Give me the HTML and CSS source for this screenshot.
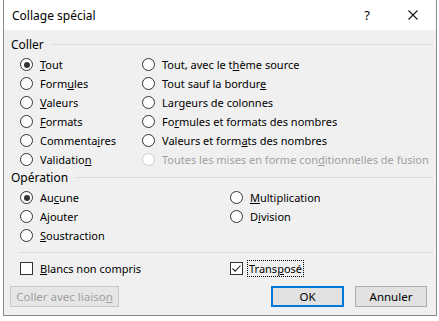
FILE: index.html
```html
<!DOCTYPE html>
<html lang="fr">
<head>
  <meta charset="UTF-8">
  <title>Collage spécial</title>
  <link rel="stylesheet" href="styles.css">
</head>
<body>

  <!-- Dialog -->
  <div class="dialog">
    <div class="titlebar">
      <span class="title">Collage spécial</span>
      <span class="caption-btn help">?</span>
      <span class="caption-btn close">
        <svg width="10" height="10" viewBox="0 0 10 10"><path d="M0.5 0.5L9.5 9.5M9.5 0.5L0.5 9.5" stroke="#111" stroke-width="1.1" fill="none"/></svg>
      </span>
    </div>

    <div class="dialog-body">
      <div class="group-head"><span>Coller</span></div>
      <div class="opts paste">
        <label class="opt"><span class="radio on"></span><span><u>T</u>out</span></label>
        <label class="opt"><span class="radio"></span><span>Tout, avec le t<u>h</u>ème source</span></label>
        <label class="opt"><span class="radio"></span><span>Form<u>u</u>les</span></label>
        <label class="opt"><span class="radio"></span><span>Tout sauf la bordur<u>e</u></span></label>
        <label class="opt"><span class="radio"></span><span><u>V</u>aleurs</span></label>
        <label class="opt"><span class="radio"></span><span>Lar<u>g</u>eurs de colonnes</span></label>
        <label class="opt"><span class="radio"></span><span><u>F</u>ormats</span></label>
        <label class="opt"><span class="radio"></span><span>Fo<u>r</u>mules et formats des nombres</span></label>
        <label class="opt"><span class="radio"></span><span>Commenta<u>i</u>res</span></label>
        <label class="opt"><span class="radio"></span><span>Valeurs et form<u>a</u>ts des nombres</span></label>
        <label class="opt"><span class="radio"></span><span>Validatio<u>n</u></span></label>
        <label class="opt disabled"><span class="radio"></span><span>Toutes les mises en forme con<u>d</u>itionnelles de fusion</span></label>
      </div>

      <div class="group-head"><span>Opération</span></div>
      <div class="opts operation">
        <label class="opt"><span class="radio on"></span><span>Au<u>c</u>une</span></label>
        <label class="opt"><span class="radio"></span><span><u>M</u>ultiplication</span></label>
        <label class="opt"><span class="radio"></span><span>A<u>j</u>outer</span></label>
        <label class="opt"><span class="radio"></span><span>D<u>i</u>vision</span></label>
        <label class="opt"><span class="radio"></span><span><u>S</u>oustraction</span></label>
      </div>

      <div class="separator"></div>

      <div class="opts checks">
        <label class="opt"><span class="check"></span><span><u>B</u>lancs non compris</span></label>
        <label class="opt"><span class="check on"><svg width="11" height="11" viewBox="0 0 11 11"><path d="M1.5 5.5L4.2 8.2L9.5 2.5" stroke="#222" stroke-width="1.1" fill="none"/></svg></span><span class="focus">Trans<u>p</u>osé</span></label>
      </div>

      <div class="buttons">
        <button class="btn link" disabled>Coller avec liaiso<u>n</u></button>
        <span class="spacer"></span>
        <button class="btn default">OK</button>
        <button class="btn">Annuler</button>
      </div>
    </div>
  </div>

</body>
</html>
```

FILE: styles.css
```css
/* Global */
body {
  margin: 0;
  padding: 0;
  background-color: #fff;
  font-family: "Noto Sans", "Open Sans", sans-serif;
  font-size: 11px;
  color: #000;
  overflow: hidden;
}

/* Dialog frame */
.dialog {
  width: 432px;
  height: 315px;
  margin-left: 3px;
  border: 1px solid #8a8a8a;
  border-top: none;
  background-color: #f0f0f0;
  display: flex;
  flex-direction: column;
}

.titlebar {
  height: 30px;
  background-color: #fff;
  display: flex;
  align-items: center;
}

.title {
  flex: 1;
  padding-left: 8px;
  font-size: 12px;
}

.caption-btn {
  width: 46px;
  height: 30px;
  display: flex;
  align-items: center;
  justify-content: center;
}

.help {
  font-size: 13px;
}

/* Body */
.dialog-body {
  flex: 1;
  padding: 6px 3px 0 7px;
}

.group-head {
  height: 16px;
  display: flex;
  align-items: center;
  gap: 8px;
  margin-bottom: 3px;
  font-size: 12px;
}

.group-head::after {
  content: "";
  flex: 1;
  height: 1px;
  background-color: #dcdcdc;
}

.opts {
  display: grid;
  margin-left: 9px;
}

.paste {
  grid-template-columns: 122px 1fr;
}

.operation, .checks {
  grid-template-columns: 210px 1fr;
}

.opt {
  height: 19px;
  display: flex;
  align-items: center;
  gap: 7px;
  white-space: nowrap;
}

.opt.disabled {
  color: #a0a0a0;
}

.radio {
  width: 11px;
  height: 11px;
  border: 1px solid #333;
  border-radius: 50%;
  background-color: #fff;
  display: flex;
  align-items: center;
  justify-content: center;
  flex: none;
}

.radio.on::after {
  content: "";
  width: 6px;
  height: 6px;
  border-radius: 50%;
  background-color: #333;
}

.disabled .radio {
  border-color: #cccccc;
}

.separator {
  height: 1px;
  background-color: #dcdcdc;
  margin: 7px 0 0 7px;
}

.checks {
  margin-top: 7px;
}

.checks .opt {
  height: 17px;
}

.check {
  width: 11px;
  height: 11px;
  border: 1px solid #333;
  background-color: #fff;
  display: flex;
  align-items: center;
  justify-content: center;
  flex: none;
}

.focus {
  outline: 1px dotted #000;
  outline-offset: 0;
  padding: 0 1px;
  margin-left: -2px;
}

/* Buttons */
.buttons {
  display: flex;
  margin: 9px 6px 0 -1px;
  gap: 11px;
}

.spacer {
  flex: 1;
}

.btn {
  height: 21px;
  width: 72px;
  padding: 0;
  font-family: inherit;
  font-size: 11.5px;
  color: #000;
  background-color: #e1e1e1;
  border: 1px solid #adadad;
}

.btn.link {
  width: 109px;
  color: #a0a0a0;
  background-color: #e6e6e6;
  border-color: #c8c8c8;
}

.btn.default {
  width: 73px;
  border: 2px solid #0078d7;
}
```
